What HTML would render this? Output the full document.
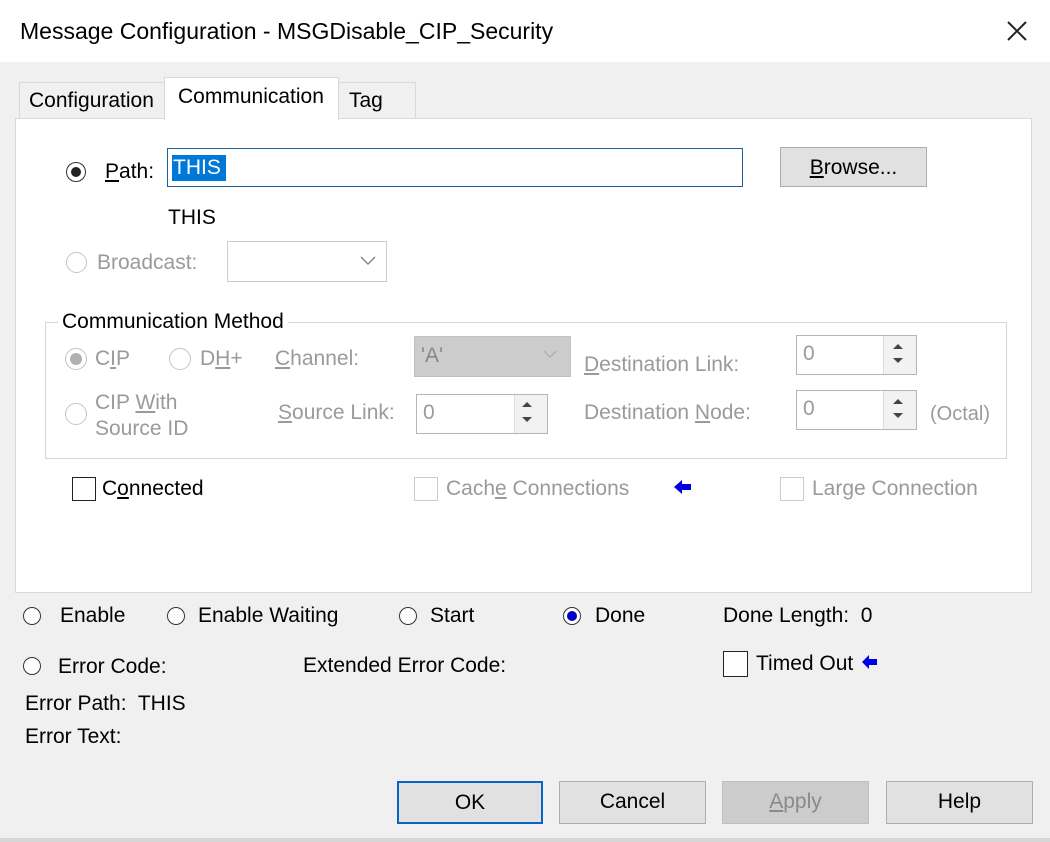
<!DOCTYPE html>
<html><head><meta charset="utf-8"><style>
body{margin:0;width:1050px;height:842px;background:#f0f0f0;font-family:"Liberation Sans",sans-serif;font-size:21px;color:#000;position:relative;overflow:hidden}
.a{position:absolute;white-space:nowrap;line-height:24px}
.g{color:#9a9a9a}
.box{position:absolute;box-sizing:border-box}
.r{position:absolute;width:18px;height:18px;border-radius:50%;border:1px solid #333;box-sizing:border-box;background:#fff}
.rg{border-color:#c4c4c4}
.cb{position:absolute;width:24px;height:24px;border:1.5px solid #222;box-sizing:border-box;background:#fff}
.btn{position:absolute;box-sizing:border-box;background:#e1e1e1;border:1px solid #adadad;text-align:center;line-height:40px}
.spin{position:absolute;box-sizing:border-box;border:1px solid #b5b5b5;background:#fff}
.spin .up{position:absolute;right:0;top:0;width:32px;height:100%;border-left:1px solid #ddd;background:#f2f2f2}
u{text-decoration:underline}
</style></head><body>
<div class="box" style="left:0;top:0;width:1050px;height:62px;background:#fff"></div>
<div class="a" style="left:20px;top:19px;font-size:23px">Message Configuration - MSGDisable_CIP_Security</div>
<svg class="box" style="left:1006px;top:20px" width="22" height="22"><path d="M2 2L20 20M20 2L2 20" stroke="#222" stroke-width="2"/></svg>

<div class="box" style="left:19px;top:82px;width:146px;height:37px;border:1px solid #d9d9d9;background:#f0f0f0"></div>
<div class="a" style="left:29px;top:89px">Configuration</div>
<div class="box" style="left:338px;top:82px;width:78px;height:37px;border:1px solid #d9d9d9;background:#f0f0f0"></div>
<div class="a" style="left:349px;top:89px">Tag</div>
<div class="box" style="left:15px;top:118px;width:1017px;height:475px;border:1px solid #d9d9d9;background:#fff"></div>
<div class="box" style="left:164px;top:77px;width:175px;height:43px;border:1px solid #d9d9d9;border-bottom:none;background:#fff"></div>
<div class="a" style="left:178px;top:85px">Communication</div>

<div class="r" style="left:66px;top:162px;width:20px;height:20px;border-width:1.5px"></div>
<div class="box" style="left:71px;top:167px;width:10px;height:10px;border-radius:50%;background:#222"></div>
<div class="a" style="left:105px;top:160px"><u>P</u>ath:</div>
<div class="box" style="left:167px;top:148px;width:576px;height:39px;border:1.5px solid #1f5f9f;background:#fff"></div>
<div class="box" style="left:172px;top:155px;width:54px;height:26px;background:#0078d7"></div>
<div class="a" style="left:173px;top:156px;color:#fff">THIS</div>
<div class="btn" style="left:780px;top:147px;width:147px;height:40px"><u>B</u>rowse...</div>
<div class="a" style="left:168px;top:206px">THIS</div>

<div class="r rg" style="left:66px;top:252px;width:21px;height:21px"></div>
<div class="a g" style="left:97px;top:251px">Broadcast:</div>
<div class="box" style="left:227px;top:241px;width:160px;height:41px;border:1px solid #ccc;background:#fff"></div>
<svg class="box" style="left:360px;top:256px" width="16" height="10"><path d="M1 1L8 8L15 1" stroke="#888" fill="none" stroke-width="1.5"/></svg>

<div class="box" style="left:45px;top:322px;width:962px;height:137px;border:1px solid #d5d5d5"></div>
<div class="a" style="left:58px;top:310px;background:#fff;padding:0 4px">Communication Method</div>
<div class="r rg" style="left:65px;top:348px;width:22px;height:22px"></div>
<div class="box" style="left:70px;top:353px;width:12px;height:12px;border-radius:50%;background:#b0b0b0"></div>
<div class="a g" style="left:95px;top:347px">C<u>I</u>P</div>
<div class="r rg" style="left:169px;top:348px;width:22px;height:22px"></div>
<div class="a g" style="left:200px;top:347px">D<u>H</u>+</div>
<div class="a g" style="left:275px;top:347px"><u>C</u>hannel:</div>
<div class="box" style="left:414px;top:336px;width:157px;height:41px;background:#cccccc;border:1px solid #c0c0c0"></div>
<div class="a g" style="left:421px;top:344px;color:#888">'A'</div>
<svg class="box" style="left:543px;top:350px" width="14" height="9"><path d="M1 1L7 7L13 1" stroke="#aaa" fill="none" stroke-width="1.2"/></svg>
<div class="a g" style="left:584px;top:353px"><u>D</u>estination Link:</div>
<div class="spin" style="left:796px;top:335px;width:121px;height:40px"><div class="up"></div></div>
<div class="a g" style="left:803px;top:342px">0</div>
<div class="r rg" style="left:65px;top:403px;width:22px;height:22px"></div>
<div class="a g" style="left:95px;top:391px">CIP <u>W</u>ith</div>
<div class="a g" style="left:95px;top:417px">Source ID</div>
<div class="a g" style="left:278px;top:401px"><u>S</u>ource Link:</div>
<div class="spin" style="left:416px;top:394px;width:132px;height:40px"><div class="up"></div></div>
<div class="a g" style="left:423px;top:401px">0</div>
<div class="a g" style="left:584px;top:401px">Destination <u>N</u>ode:</div>
<div class="spin" style="left:796px;top:390px;width:121px;height:40px"><div class="up"></div></div>
<div class="a g" style="left:803px;top:397px">0</div>
<div class="a g" style="left:930px;top:402px;font-size:20px">(Octal)</div>
<svg class="box" style="left:880px;top:338px" width="36" height="96" fill="#444"><path d="M13 11L18 6L23 11Z"/><path d="M13 20L18 25L23 20Z"/><path d="M13 66L18 61L23 66Z"/><path d="M13 75L18 80L23 75Z"/></svg>
<svg class="box" style="left:512px;top:397px" width="36" height="36" fill="#444"><path d="M10 10L15 5L20 10Z"/><path d="M10 20L15 25L20 20Z"/></svg>

<div class="cb" style="left:72px;top:477px"></div>
<div class="a" style="left:102px;top:477px">C<u>o</u>nnected</div>
<div class="cb" style="left:414px;top:477px;border:1px solid #ccc"></div>
<div class="a g" style="left:446px;top:477px">Cach<u>e</u> Connections</div>
<svg class="box" style="left:674px;top:480px" width="18" height="14"><path d="M0 7L8 0V4H17V10H8V14Z" fill="#0000e0"/></svg>
<div class="cb" style="left:780px;top:477px;border:1px solid #ccc"></div>
<div class="a g" style="left:812px;top:477px">Lar<u>g</u>e Connection</div>

<div class="r" style="left:23px;top:607px"></div><div class="a" style="left:60px;top:604px">Enable</div>
<div class="r" style="left:167px;top:607px"></div><div class="a" style="left:198px;top:604px">Enable Waiting</div>
<div class="r" style="left:399px;top:607px"></div><div class="a" style="left:430px;top:604px">Start</div>
<div class="r" style="left:563px;top:607px"></div><div class="box" style="left:567px;top:611px;width:10px;height:10px;border-radius:50%;background:#0000c8"></div>
<div class="a" style="left:595px;top:604px">Done</div>
<div class="a" style="left:723px;top:604px">Done Length:&nbsp; 0</div>
<div class="r" style="left:23px;top:657px"></div><div class="a" style="left:58px;top:655px">Error Code:</div>
<div class="a" style="left:303px;top:654px">Extended Error Code:</div>
<div class="cb" style="left:723px;top:651px;width:25px;height:26px"></div>
<div class="a" style="left:756px;top:652px">Timed Out</div>
<svg class="box" style="left:862px;top:655px" width="16" height="14"><path d="M0 7L7 0V4H15V10H7V14Z" fill="#0000e0"/></svg>
<div class="a" style="left:25px;top:692px">Error Path:&nbsp; THIS</div>
<div class="a" style="left:25px;top:725px">Error Text:</div>

<div class="btn" style="left:397px;top:781px;width:146px;height:43px;border:2px solid #0a64c8;line-height:39px">OK</div>
<div class="btn" style="left:559px;top:781px;width:147px;height:43px">Cancel</div>
<div class="btn" style="left:722px;top:781px;width:147px;height:43px;background:#cccccc;border-color:#bfbfbf;color:#8a8a8a"><u>A</u>pply</div>
<div class="btn" style="left:886px;top:781px;width:147px;height:43px">Help</div>
<div class="box" style="left:0;top:838px;width:1050px;height:4px;background:#d6d6d6"></div>
</body></html>
